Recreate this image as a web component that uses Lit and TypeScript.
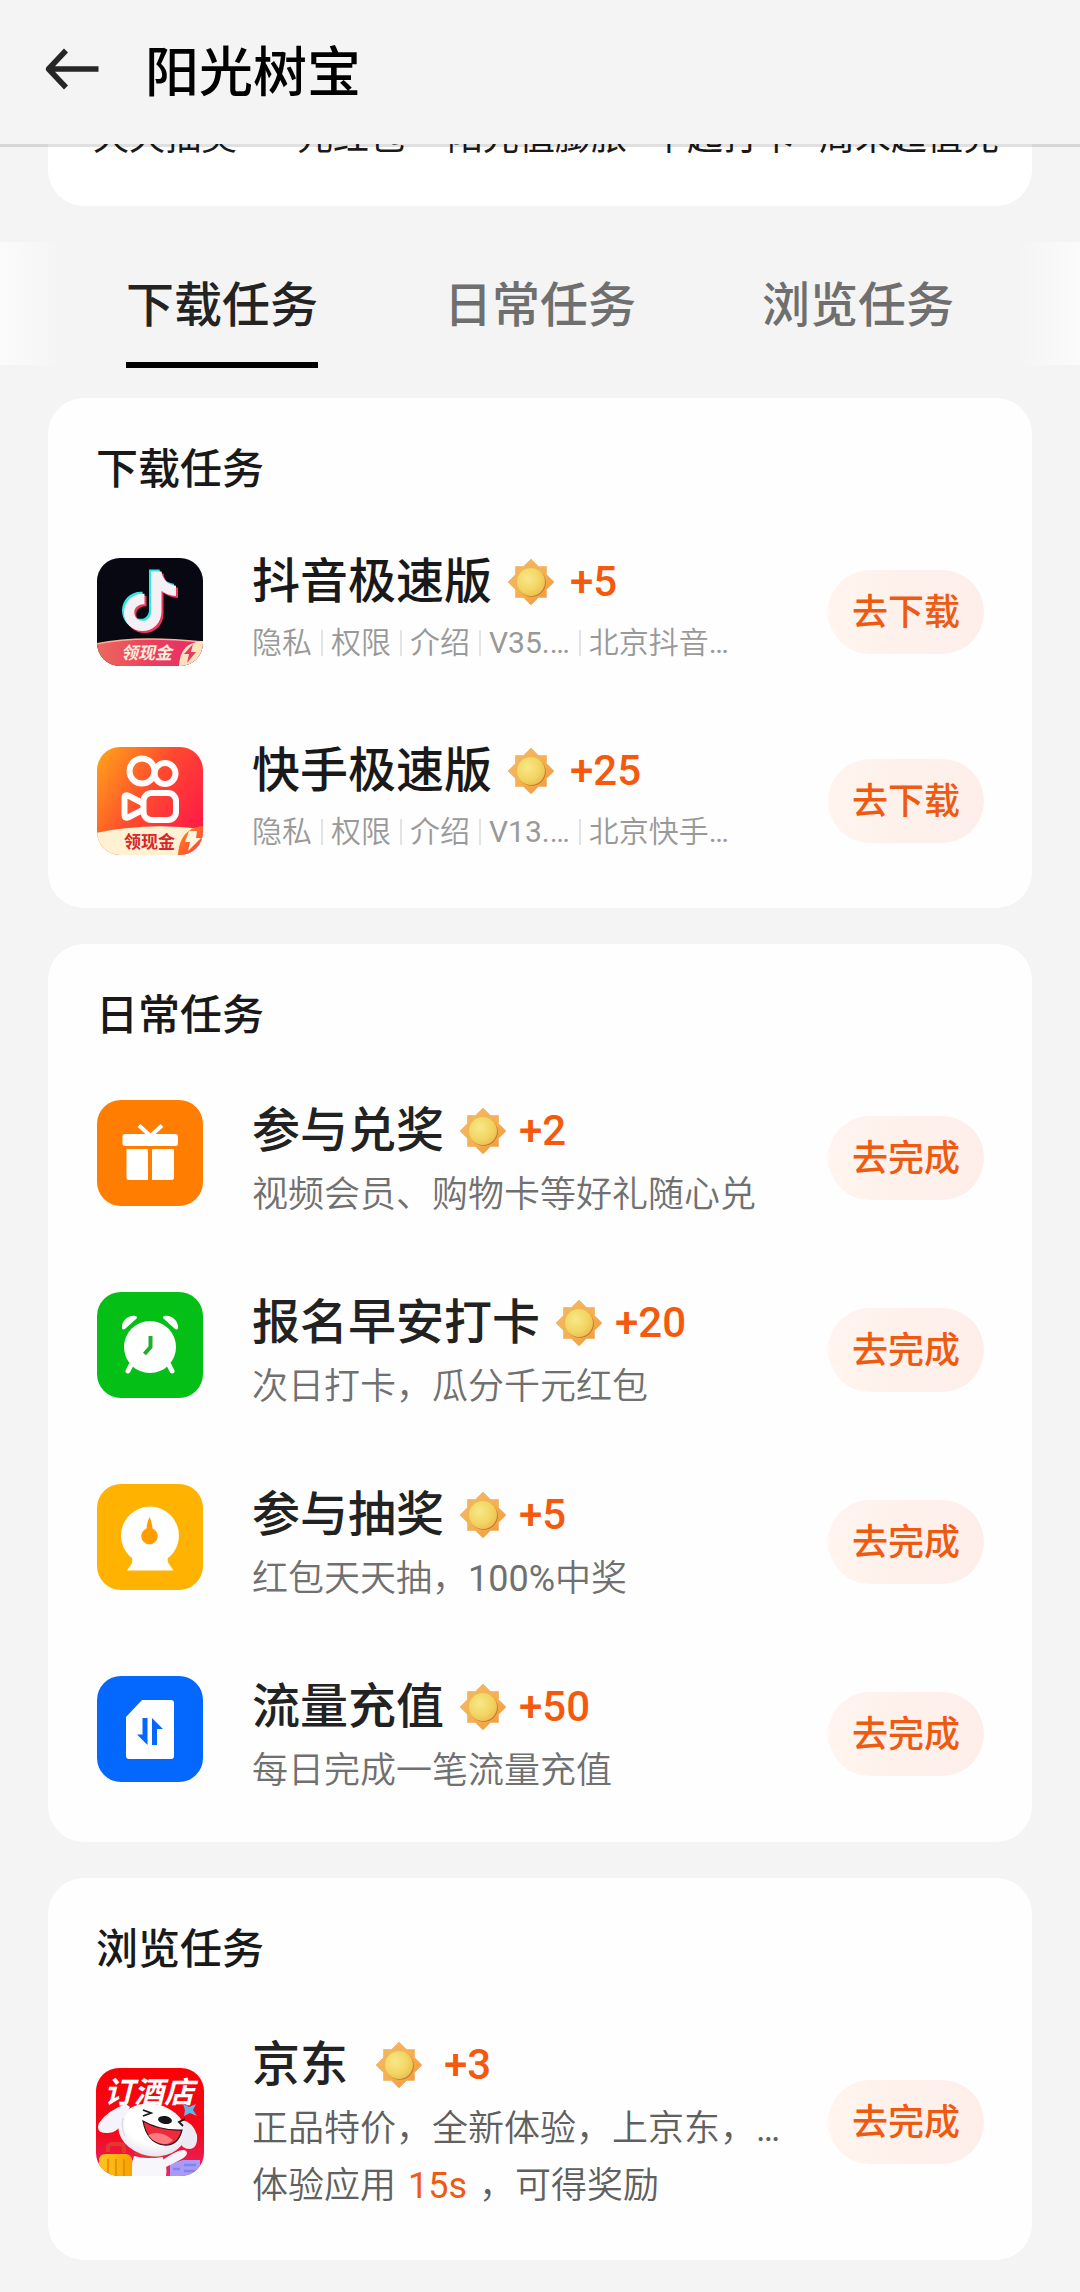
import { LitElement, html, css, svg, nothing, type TemplateResult } from "lit";
import { customElement, property } from "lit/decorators.js";

interface Task {
  icon: TemplateResult;
  name: string;
  reward: number;
  action: string;
  meta?: string[];
  lines?: Array<string | TemplateResult>;
  spaced?: boolean;
}

const tile = (body: TemplateResult) => html`
  <svg viewBox="0 0 108 108" width="108" height="108" aria-hidden="true">${body}</svg>
`;

const notePath =
  "M0 0h10.500c.8 7.500 6.500 13.500 14.500 14.200v10.300c-5.500-.2-10.300-2-14.500-5v20.500c0 12-9 19.500-19 19.500s-18.500-7.500-18.500-18.500 9-19.500 20.500-18.700v10.500c-5.500-.8-10.200 3-10.200 8.200 0 4.800 3.800 8.300 8.500 8.300 5 0 8.200-3.700 8.200-8.800z";

const douyin = tile(svg`
  <defs>
    <clipPath id="dy-clip"><rect x="1" width="106" height="108" rx="23" /></clipPath>
    <linearGradient id="dy-band" x1="0" x2="1"><stop offset="0" stop-color="#ea6a5e" /><stop offset=".5" stop-color="#ee3f5c" /><stop offset="1" stop-color="#e42a6e" /></linearGradient>
  </defs>
  <g clip-path="url(#dy-clip)">
    <rect width="108" height="108" fill="#070812" />
    <path d=${notePath} transform="translate(53 11.500)" fill="#35e6e0" />
    <path d=${notePath} transform="translate(57 15.500)" fill="#f0355c" />
    <path d=${notePath} transform="translate(55 13.500)" fill="#f3f1f6" />
    <path d="M0 86Q40 77 108 84V108H0z" fill="url(#dy-band)" />
    <path d="M0 86Q40 77 108 84" fill="none" stroke="#f8b49a" stroke-width="1.500" />
    <path d="M83 108C84 92 91 84 108 83V108z" fill="#fde3bd" />
    <path d="M97 86l-9 10h5l-2 9 9-11h-5z" fill="#e83a5e" />
    <text class="ribbon slant" x="25" y="101" fill="#fff0dc">领现金</text>
  </g>
`);

const kuaishou = tile(svg`
  <defs>
    <clipPath id="ks-clip"><rect x="1" width="106" height="108" rx="23" /></clipPath>
    <linearGradient id="ks-bg" x1="0" y1=".1" x2="1" y2=".7"><stop offset="0" stop-color="#ffa01a" /><stop offset=".5" stop-color="#ff4a2e" /><stop offset="1" stop-color="#ff1a48" /></linearGradient>
    <linearGradient id="ks-corner" x1="0" y1="0" x2="1" y2="1"><stop offset="0" stop-color="#ff8a1e" /><stop offset="1" stop-color="#ff3a3c" /></linearGradient>
  </defs>
  <g clip-path="url(#ks-clip)">
    <rect width="108" height="108" fill="url(#ks-bg)" />
    <g fill="none" stroke="#fff" stroke-width="6" stroke-linejoin="round">
      <circle cx="46" cy="24" r="12.500" />
      <circle cx="69" cy="26.500" r="10.500" />
      <rect x="47.500" y="46" width="32.500" height="27" rx="8" />
      <path d="M46.500 56L33 49q-4.500-2-4.500 2v17q0 4 4.500 2l13.500-7" />
    </g>
    <path d="M0 86Q50 75 108 82V108H0z" fill="#fff1d2" />
    <path d="M82 108C83 90 92 80 108 79V108z" fill="url(#ks-corner)" />
    <path d="M93 84h8l-1 7h5l-13 13 2-9h-5z" fill="#fff6e0" />
    <text class="ribbon" x="28" y="101" fill="#d9252b">领现金</text>
  </g>
`);

const gift = tile(svg`
  <rect x="1" y="1" width="106" height="106" rx="24" fill="#ff7d00" />
  <path d="M43 26.500l10.500 9.500h2l10.500-9.500" fill="none" stroke="#fff" stroke-width="4" />
  <rect x="26.500" y="35" width="55.500" height="12" rx="2.500" fill="#fff" />
  <path d="M30.500 50h21.500v31h-19q-2.500 0-2.500-2.500zM56 50h22v28.500q0 2.500-2.500 2.500H56z" fill="#fff" />
`);

const alarm = tile(svg`
  <rect x="1" y="1" width="106" height="106" rx="24" fill="#04bf15" />
  <path d="M35 74l-3 6M73 74l3 6" stroke="#fff" stroke-width="5" stroke-linecap="round" />
  <circle cx="54" cy="56" r="26" fill="#fff" />
  <path d="M26 37c-.5-7 5.500-12.800 12.500-12.300 2.500.3 3.200 2 1.500 3.300L29.500 37.500c-1.500 1.300-3.500 1.300-3.500-.5zM82 37c.5-7-5.500-12.800-12.500-12.300-2.500.3-3.200 2-1.500 3.300L78.500 37.500c1.500 1.300 3.500 1.300 3.500-.5z" fill="#fff" />
  <path d="M54.500 45v11l-6 7" fill="none" stroke="#1faf2c" stroke-width="4" />
`);

const wheel = tile(svg`
  <rect x="1" y="1" width="106" height="106" rx="24" fill="#ffb300" />
  <circle cx="54" cy="52.500" r="29" fill="#fff" />
  <path d="M35 72h37.500q-2 5 .5 9l4.500 6.500H31l4.500-6.500q2-4-.5-9z" fill="#fff" />
  <path d="M53.500 34q2.500 4.500 3 11.500a8.200 8.200 0 1 1-6 0q.500-7 3-11.500z" fill="#ff9d00" />
`);

const simCard = tile(svg`
  <rect x="1" y="1" width="106" height="106" rx="24" fill="#0468ff" />
  <path d="M46 25h29q3 0 3 3v53q0 3-3 3H33q-3 0-3-3V42z" fill="#fff" />
  <path d="M46.500 43h5v27L41 59.500h5.500zM56 70V43l11 11h-6v16z" fill="#0468ff" />
`);

const jingdong = tile(svg`
  <defs>
    <clipPath id="jd-clip"><rect width="108" height="108" rx="23" /></clipPath>
    <linearGradient id="jd-bg" x1="0" y1="0" x2="0" y2="1"><stop offset="0" stop-color="#fb0006" /><stop offset=".6" stop-color="#f30a1c" /><stop offset="1" stop-color="#e8246a" /></linearGradient>
    <radialGradient id="jd-dog" cx=".45" cy=".4" r=".6"><stop offset=".6" stop-color="#fff" /><stop offset="1" stop-color="#e6e6ee" /></radialGradient>
    <linearGradient id="jd-case" x1="0" x2="1"><stop offset="0" stop-color="#ffc51f" /><stop offset="1" stop-color="#f7a300" /></linearGradient>
  </defs>
  <g clip-path="url(#jd-clip)">
    <rect width="108" height="108" fill="url(#jd-bg)" />
    <text class="banner slant" x="8" y="35" fill="#fff">订酒店</text>
    <path d="M74 108V96l13-4 17 0v16z" fill="#a99bf5" />
    <path d="M88 97h12M88 103h12M77 101h7" stroke="#7d86f0" stroke-width="2.500" />
    <path d="M68 91q18-12 22-8 4 4-8 10l-14 7z" fill="#f6f4fa" />
    <path d="M38 88q14 4 28 0 6 10 4 20H36q-2-10 2-20z" fill="#f7f6fb" />
    <path d="M39 84q14 6 27 3" fill="none" stroke="#e2343c" stroke-width="4" />
    <path d="M86 52q11 2 15 15 1 13-7 14-9 0-11-9z" fill="#eceaf2" />
    <ellipse cx="56" cy="62" rx="34" ry="26" fill="url(#jd-dog)" transform="rotate(12 56 62)" />
    <path d="M30 36Q12 42 3 55q-4 10 8 10 12 0 17-14l6-12z" fill="#f5f4fa" />
    <path d="M27 50q-2 10 2 18" fill="none" stroke="#dcdae6" stroke-width="1.500" />
    <path d="M47 53q17 10 39 9-4 16-18 15-17-2-21-24z" fill="#ef2a3c" stroke="#331218" stroke-width="1.200" />
    <path d="M52 67q12-6 25 5-4 4.500-9 4-10-1-16-9z" fill="#ff7b80" />
    <ellipse cx="69" cy="52" rx="7" ry="4" fill="#15151a" transform="rotate(8 69 52)" />
    <path d="M47 42l8 3-8 3M89 51l-6 3 4 4" fill="none" stroke="#15151a" stroke-width="1.800" />
    <path d="M87 36l6 3 7-3-3 6 4 6-7-3-6 3 1-6z" fill="#5bb8ee" />
    <path d="M12 84v-4q0-4 4-4h8q4 0 4 4v5" fill="none" stroke="#e03a2e" stroke-width="4" />
    <rect x="3" y="86" width="33" height="30" rx="6" fill="url(#jd-case)" />
    <path d="M12 91v18M20 91v18M28 91v18" stroke="#e08f00" stroke-width="1.800" />
  </g>
`);

const sections: Array<{ title: string; kind: string; tasks: Task[] }> = [
  {
    title: "下载任务",
    kind: "apps",
    tasks: [
      { icon: douyin, name: "抖音极速版", reward: 5, action: "去下载", meta: ["隐私", "权限", "介绍", "V35.…", "北京抖音…"] },
      { icon: kuaishou, name: "快手极速版", reward: 25, action: "去下载", meta: ["隐私", "权限", "介绍", "V13.…", "北京快手…"] },
    ],
  },
  {
    title: "日常任务",
    kind: "daily",
    tasks: [
      { icon: gift, name: "参与兑奖", reward: 2, action: "去完成", lines: ["视频会员、购物卡等好礼随心兑"] },
      { icon: alarm, name: "报名早安打卡", reward: 20, action: "去完成", lines: ["次日打卡，瓜分千元红包"] },
      { icon: wheel, name: "参与抽奖", reward: 5, action: "去完成", lines: ["红包天天抽，100%中奖"] },
      { icon: simCard, name: "流量充值", reward: 50, action: "去完成", lines: ["每日完成一笔流量充值"] },
    ],
  },
  {
    title: "浏览任务",
    kind: "browse",
    tasks: [
      {
        icon: jingdong,
        name: "京东",
        reward: 3,
        action: "去完成",
        spaced: true,
        lines: ["正品特价，全新体验，上京东，…", html`体验应用<span class="accent">15s</span>，可得奖励`],
      },
    ],
  },
];

/** Sets Latin runs in a slightly stronger weight so they balance the Chinese text. */
const balanced = (text: string | TemplateResult) =>
  typeof text === "string"
    ? text.split(/([\w.%…]+)/).map((part, i) => (i % 2 ? html`<span class="latin">${part}</span>` : part))
    : text;

@customElement("sun-icon")
export class SunIcon extends LitElement {
  static styles = css`
    :host { display: block; flex: none; width: 48px; height: 48px; }
    .sun { display: block; }
  `;

  render() {
    return html`
      <svg class="sun" viewBox="0 0 48 48" width="48" height="48" aria-hidden="true">
        <defs>
          <linearGradient id="rays" x1="0" y1="0" x2="1" y2="1">
            <stop offset="0" stop-color="#efb866" /><stop offset=".5" stop-color="#f6b050" /><stop offset="1" stop-color="#f2943c" />
          </linearGradient>
          <radialGradient id="disc" cx=".38" cy=".38" r=".7">
            <stop offset="0" stop-color="#f8e888" /><stop offset=".6" stop-color="#f2d664" /><stop offset="1" stop-color="#ebbd4c" />
          </radialGradient>
        </defs>
        <path d="M24 1l7.500 7.500h8v8L47 24l-7.500 7.500v8h-8L24 47l-7.500-7.500h-8v-8L1 24l7.500-7.500v-8h8z" fill="url(#rays)" stroke="#eba650" stroke-width=".5" stroke-linejoin="round" />
        <circle cx="24.800" cy="24.800" r="14" fill="#b0662a" opacity=".75" />
        <circle cx="24" cy="24" r="14" fill="url(#disc)" />
      </svg>
    `;
  }
}

@customElement("task-row")
export class TaskRow extends LitElement {
  @property({ attribute: false }) task!: Task;
  @property({ reflect: true }) kind = "daily";

  static styles = css`
    :host { display: flex; align-items: center; min-height: 120px; }
    .icon { flex: none; width: 108px; height: 108px; margin-right: 48px; }
    .icon svg { display: block; }
    :host([kind="daily"]) .icon { margin-bottom: 11px; }
    .ribbon { font: 700 17px "Noto Sans CJK SC", sans-serif; }
    .banner { font: 700 30px "Noto Sans CJK SC", sans-serif; }
    .slant { font-style: italic; }
    .body { flex: 1; min-width: 0; align-self: flex-start; }
    .heading { display: flex; align-items: center; gap: 15px; margin-bottom: 8px; }
    .name { margin: 0; font-size: 48px; line-height: 66px; font-weight: 500; color: #222; white-space: nowrap; }
    .prize { display: flex; align-items: center; gap: 12px; }
    .spaced { gap: 27px; }
    .spaced .prize { gap: 21px; }
    .reward { font-size: 42px; line-height: 48px; font-weight: 500; color: #f4590d; }
    .lines { display: flex; flex-direction: column; gap: 11px; }
    .line { margin: 0; font-size: 36px; line-height: 46px; font-weight: 350; color: #707070; white-space: nowrap; }
    .latin { font-weight: 400; }
    :host([kind="browse"]) .line { color: #606060; }
    :host([kind="browse"]) { min-height: 180px; }
    .accent { margin: 0 12px; color: #ee5b14; font-weight: 400; }
    :host([kind="apps"]) .heading { margin-bottom: 0; }
    :host([kind="apps"]) .prize { gap: 15px; }
    :host([kind="apps"]) .name { line-height: 62px; color: #191919; }
    .meta { display: flex; align-items: center; margin: 0; padding: 0; list-style: none; font-size: 30px; line-height: 60px; font-weight: 350; color: #999; white-space: nowrap; }
    .meta li { display: flex; align-items: center; }
    .meta li + li::before { content: ""; width: 2px; height: 26px; margin: 0 8px 0 9px; background: #e3e3e3; }
    .action {
      flex: none; width: 156px; height: 84px; margin-left: 12px; padding: 2px 0 0; border: 0; border-radius: 42px;
      background: linear-gradient(90deg, #fff4ee, #fdeeea);
      font: inherit; font-size: 36px; line-height: 48px; font-weight: 500; color: #ee5a12; cursor: pointer;
    }
  `;

  render() {
    const t = this.task;
    return html`
      <div class="icon">${t.icon}</div>
      <div class="body">
        <div class="heading ${t.spaced ? "spaced" : ""}">
          <h3 class="name">${t.name}</h3>
          <div class="prize"><sun-icon></sun-icon><span class="reward">+${t.reward}</span></div>
        </div>
        ${t.meta ? html`<ul class="meta">${t.meta.map((m) => html`<li>${balanced(m)}</li>`)}</ul>` : nothing}
        ${t.lines ? html`<div class="lines">${t.lines.map((l) => html`<p class="line">${balanced(l)}</p>`)}</div>` : nothing}
      </div>
      <button class="action" type="button">${t.action}</button>
    `;
  }
}

@customElement("app-root")
export class AppRoot extends LitElement {
  static styles = css`
    :host { display: block; min-height: 100vh; background: #f4f4f4; font-family: Roboto, "Noto Sans CJK SC", sans-serif; color: #191919; }
    .bar { position: sticky; top: 0; z-index: 1; display: flex; align-items: center; gap: 45px; height: 144px; padding: 0 44px; box-sizing: border-box; background: #f4f4f4; box-shadow: 0 3px 0 rgba(0, 0, 0, 0.12); }
    .back { flex: none; width: 56px; height: 56px; padding: 0; border: 0; background: none; cursor: pointer; }
    .back svg { display: block; }
    .title { margin: 0; padding-top: 4px; font-size: 54px; line-height: 72px; font-weight: 500; color: #000; }
    .shortcuts { display: grid; grid-template-columns: repeat(5, 1fr); margin: -44px 48px 0; padding: 14px 30px 44px 24px; border-radius: 36px; background: #fff; }
    .shortcut { font-size: 36px; line-height: 48px; color: #191919; text-align: center; text-decoration: none; white-space: nowrap; }
    .tabs { display: flex; justify-content: space-around; margin: 36px 0 33px; height: 123px; padding: 0 63px; background: linear-gradient(90deg, #fbfbfb, #f4f4f4 64px calc(100% - 64px), #fbfbfb); }
    .tab { height: 126px; box-sizing: border-box; padding: 8px 0 0; border: 0; border-bottom: 6px solid transparent; background: none; font: inherit; font-size: 48px; line-height: 112px; font-weight: 500; color: #6f6f6f; cursor: pointer; }
    .active { color: #232323; border-bottom-color: #000; }
    .sections { display: flex; flex-direction: column; gap: 36px; padding: 0 48px 32px; }
    .card { padding: 42px 48px 48px; border-radius: 36px; background: #fefefe; }
    .caption { margin: 0 0 52px; font-size: 42px; line-height: 60px; font-weight: 500; color: #191919; }
    .list { display: flex; flex-direction: column; gap: 72px; }
    .apps { gap: 67px; margin: -1px 0 -2px; }
  `;

  render() {
    return html`
      <header class="bar">
        <button class="back" type="button" aria-label="返回">
          <svg viewBox="0 0 56 56" width="56" height="56" fill="none" stroke="#262626" stroke-width="5.500" stroke-linejoin="round">
            <path d="M22 6.500L4.500 25 22 43.500M5 25h49.500" />
          </svg>
        </button>
        <h1 class="title">阳光树宝</h1>
      </header>
      <nav class="shortcuts">
        ${["天天抽奖", "元红包", "阳光值膨胀", "早起打卡", "周末超值兑"].map((s) => html`<a class="shortcut" href="#">${s}</a>`)}
      </nav>
      <div class="tabs" role="tablist">
        ${sections.map(
          (s, i) => html`<button class="tab ${i === 0 ? "active" : ""}" type="button" role="tab" aria-selected=${i === 0}>${s.title}</button>`,
        )}
      </div>
      <main class="sections">
        ${sections.map(
          (s) => html`
            <section class="card">
              <h2 class="caption">${s.title}</h2>
              <div class="list ${s.kind}">${s.tasks.map((t) => html`<task-row .task=${t} kind=${s.kind}></task-row>`)}</div>
            </section>
          `,
        )}
      </main>
    `;
  }
}
